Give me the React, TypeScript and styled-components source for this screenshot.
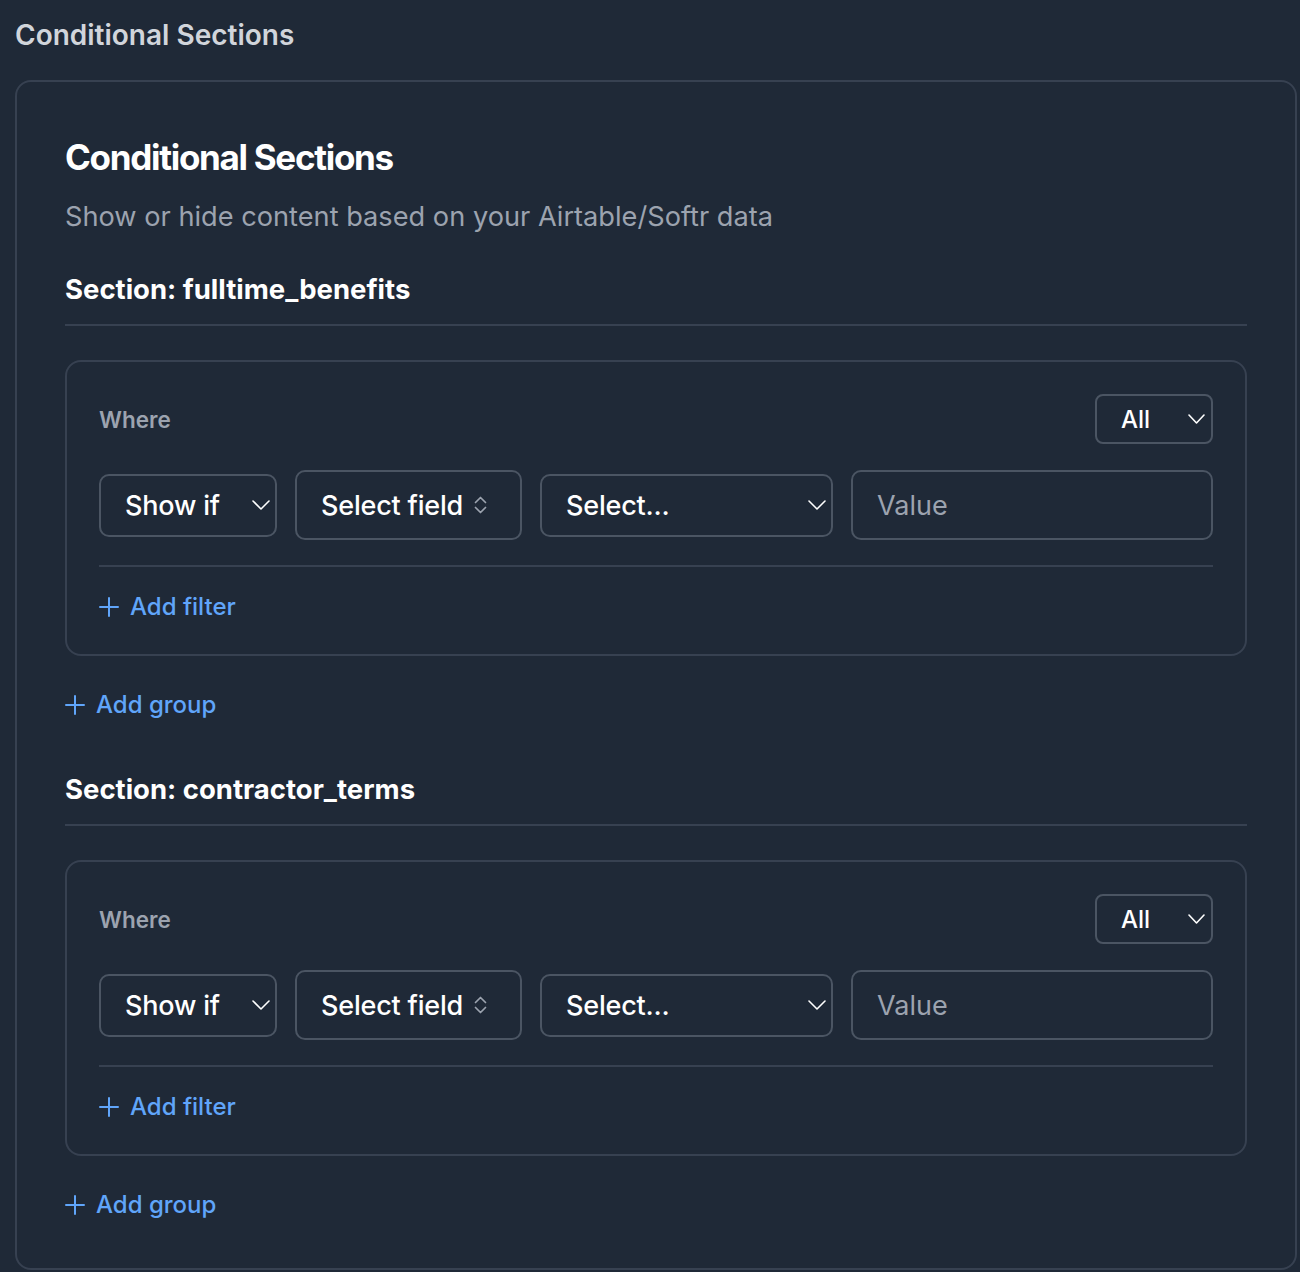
import styled, { createGlobalStyle } from 'styled-components';

const sections = ['fulltime_benefits', 'contractor_terms'];

const Chevron = ({ w = 18 }: { w?: number }) => (
  <svg width={w} height={10} viewBox={`0 0 ${w} 10`} fill="none">
    <polyline
      points={`1,1 ${w / 2},9 ${w - 1},1`}
      stroke="currentColor"
      strokeWidth="1.6"
      strokeLinecap="round"
      strokeLinejoin="round"
    />
  </svg>
);

const UpDown = () => (
  <svg width="13" height="18" viewBox="0 0 13 18" fill="none">
    <polyline points="1.5,6.5 6.5,1.5 11.5,6.5" stroke="currentColor" strokeWidth="1.7" strokeLinecap="round" strokeLinejoin="round" />
    <polyline points="1.5,11.5 6.5,16.5 11.5,11.5" stroke="currentColor" strokeWidth="1.7" strokeLinecap="round" strokeLinejoin="round" />
  </svg>
);

const PlusIcon = () => (
  <svg width="20" height="20" viewBox="0 0 20 20" fill="none">
    <path d="M10 1v18M1 10h18" stroke="currentColor" strokeWidth="2" strokeLinecap="round" />
  </svg>
);

const App = () => {
  return (
    <Page>
      <GlobalStyle />
      <TopLabel>Conditional Sections</TopLabel>
      <Card>
        <Title>Conditional Sections</Title>
        <Subtitle>Show or hide content based on your Airtable/Softr data</Subtitle>
        {sections.map((name, i) => (
          <Section key={name} $first={i === 0}>
            <SectionTitle>Section: {name}</SectionTitle>
            <Group>
              <GroupHeader>
                <Where>Where</Where>
                <SmallSelect>
                  <span>All</span>
                  <Chevron w={17} />
                </SmallSelect>
              </GroupHeader>
              <FilterRow>
                <Control $w={178} $h={63}>
                  <span>Show if</span>
                  <Chevron />
                </Control>
                <Control $w={227} $h={70} $gap={11}>
                  <span>Select field</span>
                  <Muted>
                    <UpDown />
                  </Muted>
                </Control>
                <Control $w={293} $h={63}>
                  <span>Select...</span>
                  <Chevron />
                </Control>
                <ValueInput placeholder="Value" />
              </FilterRow>
              <GroupFooter>
                <LinkButton $gap={11}>
                  <PlusIcon />
                  Add filter
                </LinkButton>
              </GroupFooter>
            </Group>
            <AddGroup>
              <LinkButton $gap={11}>
                <PlusIcon />
                Add group
              </LinkButton>
            </AddGroup>
          </Section>
        ))}
      </Card>
    </Page>
  );
};

const GlobalStyle = createGlobalStyle`
  html, body {
    margin: 0;
    padding: 0;
    background: #1f2937;
  }
  body {
    font-family: Inter, "Noto Sans", "Liberation Sans", sans-serif;
    -webkit-font-smoothing: antialiased;
  }
  * {
    box-sizing: border-box;
  }
`;

const Page = styled.div`
  min-height: 1272px;
  background: #1f2937;
  padding: 18px 3px 2px 15px;
`;

const TopLabel = styled.div`
  color: #d1d5db;
  font-size: 28px;
  font-weight: 600;
  line-height: 34px;
  margin-bottom: 28px;
`;

const Card = styled.div`
  border: 2px solid #374151;
  border-radius: 16px;
  padding: 53px 48px 47px;
`;

const Title = styled.h2`
  margin: 0;
  color: #ffffff;
  font-size: 35px;
  font-weight: 700;
  line-height: 44px;
  letter-spacing: -1.3px;
`;

const Subtitle = styled.p`
  margin: 20px 0 0;
  color: #9ca3af;
  font-size: 27.2px;
  line-height: 36px;
`;

const Section = styled.div<{ $first?: boolean }>`
  margin-top: ${p => (p.$first ? '37px' : '51px')};
`;

const SectionTitle = styled.h3`
  margin: 0;
  color: #ffffff;
  font-size: 27.5px;
  font-weight: 700;
  line-height: 34px;
  padding-bottom: 18px;
  border-bottom: 2px solid #374151;
`;

const Group = styled.div`
  margin-top: 34px;
  border: 2px solid #374151;
  border-radius: 16px;
  padding: 32px 32px 0;
`;

const GroupHeader = styled.div`
  display: flex;
  align-items: center;
  justify-content: space-between;
`;

const Where = styled.span`
  color: #9ca3af;
  font-size: 22.5px;
  font-weight: 600;
`;

const SmallSelect = styled.div`
  width: 118px;
  height: 50px;
  border: 2px solid #4b5563;
  border-radius: 8px;
  display: flex;
  align-items: center;
  justify-content: space-between;
  padding: 0 6px 0 24px;
  color: #ffffff;
  font-size: 24px;
  font-weight: 500;
`;

const FilterRow = styled.div`
  display: flex;
  align-items: center;
  gap: 18px;
  margin-top: 26px;
`;

const Control = styled.div<{ $w: number; $h: number; $gap?: number }>`
  width: ${p => p.$w}px;
  height: ${p => p.$h}px;
  flex-shrink: 0;
  border: 2px solid #4b5563;
  border-radius: 10px;
  display: flex;
  align-items: center;
  justify-content: ${p => (p.$gap ? 'flex-start' : 'space-between')};
  gap: ${p => p.$gap ?? 0}px;
  padding: 0 5px 0 24px;
  color: #ffffff;
  font-size: 27px;
  font-weight: 500;
  letter-spacing: -0.2px;
`;

const Muted = styled.span`
  display: flex;
  color: #9ca3af;
`;

const ValueInput = styled.input`
  flex: 1;
  min-width: 0;
  height: 70px;
  background: transparent;
  border: 2px solid #4b5563;
  border-radius: 10px;
  padding: 0 24px;
  color: #ffffff;
  font-family: inherit;
  font-size: 27px;
  outline: none;

  &::placeholder {
    color: #9ca3af;
  }
`;

const GroupFooter = styled.div`
  margin-top: 25px;
  border-top: 2px solid #374151;
  padding: 24px 0 31px;
`;

const LinkButton = styled.button<{ $gap: number }>`
  display: flex;
  align-items: center;
  gap: ${p => p.$gap}px;
  background: none;
  border: none;
  padding: 0;
  color: #60a5fa;
  font-family: inherit;
  font-size: 24px;
  font-weight: 500;
  line-height: 32px;
  cursor: pointer;
`;

const AddGroup = styled.div`
  margin-top: 33px;
`;

export default App;
